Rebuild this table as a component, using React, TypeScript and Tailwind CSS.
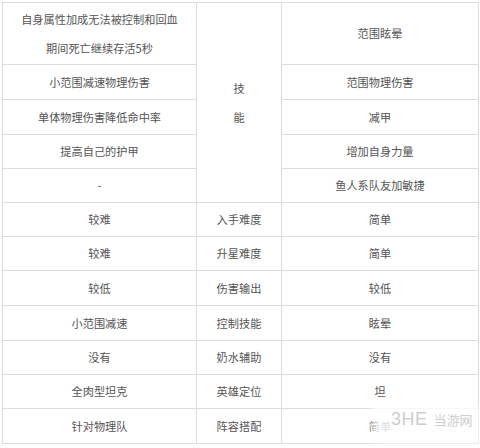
import React from "react";

const rows: { left: string; mid?: string; right: string; h: number }[] = [
  { left: "小范围减速物理伤害", right: "范围物理伤害", h: 35 },
  { left: "单体物理伤害降低命中率", right: "减甲", h: 35 },
  { left: "提高自己的护甲", right: "增加自身力量", h: 34 },
  { left: "-", right: "鱼人系队友加敏捷", h: 34 },
  { left: "较难", mid: "入手难度", right: "简单", h: 34 },
  { left: "较难", mid: "升星难度", right: "简单", h: 34 },
  { left: "较低", mid: "伤害输出", right: "较低", h: 35 },
  { left: "小范围减速", mid: "控制技能", right: "眩晕", h: 35 },
  { left: "没有", mid: "奶水辅助", right: "没有", h: 34 },
  { left: "全肉型坦克", mid: "英雄定位", right: "坦", h: 34 },
  { left: "针对物理队", mid: "阵容搭配", right: "简单", h: 35 },
];

const cell = "border border-[#dcdcdc] text-center align-middle p-0";

export default function App() {
  return (
    <div
      className="relative w-[480px] h-[448px] bg-white text-[#555] text-[11.2px]"
      style={{ fontFamily: '"Noto Sans CJK SC", "Liberation Sans", sans-serif' }}
    >
      <div className="pt-[2px] pl-[2px]">
        <table className="w-[476px] border-collapse table-fixed">
          <colgroup>
            <col className="w-[194px]" />
            <col className="w-[85px]" />
            <col className="w-[197px]" />
          </colgroup>
          <tbody>
            <tr className="h-[62px]">
              <td className={`${cell} leading-[29px]`}>
                自身属性加成无法被控制和回血
                <br />
                期间死亡继续存活5秒
              </td>
              <td rowSpan={5} className={`${cell} leading-[29px]`}>
                技
                <br />能
              </td>
              <td className={cell}>范围眩晕</td>
            </tr>
            {rows.map((r, i) => (
              <tr key={i} style={{ height: r.h }}>
                <td className={cell}>{r.left}</td>
                {r.mid !== undefined && <td className={cell}>{r.mid}</td>}
                <td className={cell}>{r.right}</td>
              </tr>
            ))}
          </tbody>
        </table>
      </div>

      {/* watermark */}
      <div className="absolute left-[372px] top-[404px] w-[108px] h-[40px] bg-white/80 blur-[3px]" />
      <div className="absolute left-[391px] top-[410px] flex items-center gap-[6px] text-[#cdcdcd]">
        <span
          className="text-[18px] tracking-[0.5px] leading-none"
          style={{ fontFamily: '"Liberation Sans", sans-serif' }}
        >
          3HE
        </span>
        <span className="text-[13px] leading-none">当游网</span>
      </div>
    </div>
  );
}
